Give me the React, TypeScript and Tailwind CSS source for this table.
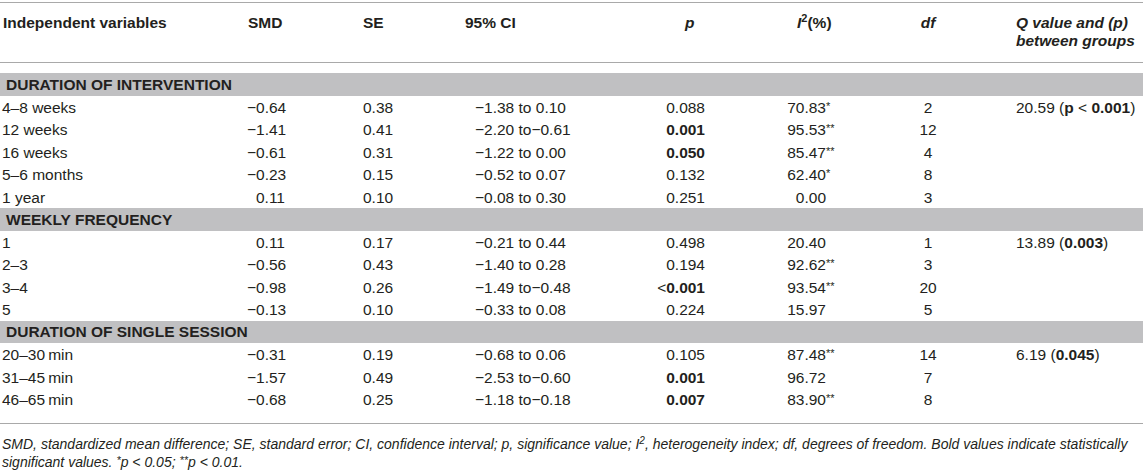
import React from "react";

type Num = { v: React.ReactNode; s?: string; b?: boolean };

type Row =
  | { band: string }
  | {
      label: string;
      smd: string;
      se: string;
      ci: string;
      p: Num;
      i2: Num;
      df: string;
      q?: React.ReactNode;
    };

const ROWS: Row[] = [
  { band: "DURATION OF INTERVENTION" },
  {
    label: "4–8 weeks",
    smd: "−0.64",
    se: "0.38",
    ci: "−1.38 to 0.10",
    p: { v: "0.088" },
    i2: { v: "70.83", s: "*" },
    df: "2",
    q: (
      <>
        20.59 (<b>p</b> &lt; <b>0.001</b>)
      </>
    ),
  },
  { label: "12 weeks", smd: "−1.41", se: "0.41", ci: "−2.20 to−0.61", p: { v: "0.001", b: true }, i2: { v: "95.53", s: "**" }, df: "12" },
  { label: "16 weeks", smd: "−0.61", se: "0.31", ci: "−1.22 to 0.00", p: { v: "0.050", b: true }, i2: { v: "85.47", s: "**" }, df: "4" },
  { label: "5–6 months", smd: "−0.23", se: "0.15", ci: "−0.52 to 0.07", p: { v: "0.132" }, i2: { v: "62.40", s: "*" }, df: "8" },
  { label: "1 year", smd: "0.11", se: "0.10", ci: "−0.08 to 0.30", p: { v: "0.251" }, i2: { v: "0.00" }, df: "3" },
  { band: "WEEKLY FREQUENCY" },
  {
    label: "1",
    smd: "0.11",
    se: "0.17",
    ci: "−0.21 to 0.44",
    p: { v: "0.498" },
    i2: { v: "20.40" },
    df: "1",
    q: (
      <>
        13.89 (<b>0.003</b>)
      </>
    ),
  },
  { label: "2–3", smd: "−0.56", se: "0.43", ci: "−1.40 to 0.28", p: { v: "0.194" }, i2: { v: "92.62", s: "**" }, df: "3" },
  {
    label: "3–4",
    smd: "−0.98",
    se: "0.26",
    ci: "−1.49 to−0.48",
    p: {
      v: (
        <>
          &lt;<b>0.001</b>
        </>
      ),
    },
    i2: { v: "93.54", s: "**" },
    df: "20",
  },
  { label: "5", smd: "−0.13", se: "0.10", ci: "−0.33 to 0.08", p: { v: "0.224" }, i2: { v: "15.97" }, df: "5" },
  { band: "DURATION OF SINGLE SESSION" },
  {
    label: "20–30\u2009min",
    smd: "−0.31",
    se: "0.19",
    ci: "−0.68 to 0.06",
    p: { v: "0.105" },
    i2: { v: "87.48", s: "**" },
    df: "14",
    q: (
      <>
        6.19 (<b>0.045</b>)
      </>
    ),
  },
  { label: "31–45\u2009min", smd: "−1.57", se: "0.49", ci: "−2.53 to−0.60", p: { v: "0.001", b: true }, i2: { v: "96.72" }, df: "7" },
  { label: "46–65\u2009min", smd: "−0.68", se: "0.25", ci: "−1.18 to−0.18", p: { v: "0.007", b: true }, i2: { v: "83.90", s: "**" }, df: "8" },
];

// column widths add up to the 1143px page
const GRID = "grid grid-cols-[240px_115px_99px_186px_110px_130px_128px_135px]";

const Stars = ({ s }: { s?: string }) =>
  s ? <span className="relative -top-[3px] text-[11px]">{s}</span> : null;

export default function App() {
  return (
    <div
      className="w-[1143px] bg-white pt-[2px] text-[15.5px] text-[#231f20]"
      style={{ fontFamily: '"Liberation Sans", Arial, sans-serif' }}
    >
      {/* header */}
      <div className={`${GRID} border-y border-[#a9a9a9] pt-[11px] pb-[12px] font-bold leading-[18px]`}>
        <div className="pl-[3px]">Independent variables</div>
        <div className="pl-2">SMD</div>
        <div className="pl-2">SE</div>
        <div className="pl-[11px]">95% CI</div>
        <div className="pl-[45px] italic">p</div>
        <div className="pl-[47px] whitespace-nowrap">
          <i>I</i>
          <span className="relative -top-[6px] text-[11px]">2</span>(%)
        </div>
        <div className="w-[96px] text-center italic">df</div>
        <div className="whitespace-nowrap pl-2 italic">
          Q value and (p)
          <br />
          between groups
        </div>
      </div>

      <div className="mt-[10px]">
        {ROWS.map((r, i) =>
          "band" in r ? (
            <div key={i} className="flex h-[22.5px] items-center bg-[#c0c0c2] pl-[6px] font-bold">
              {r.band}
            </div>
          ) : (
            <div key={i} className={`${GRID} h-[22.5px] items-center whitespace-nowrap`}>
              <div className="pl-[2px]">{r.label}</div>
              <div className="pl-[7px]">
                <span className="inline-block w-[38px] text-right">{r.smd}</span>
              </div>
              <div className="pl-2">{r.se}</div>
              <div className="pl-[21px]">{r.ci}</div>
              <div>
                <span className={`inline-block w-[65px] text-right ${r.p.b ? "font-bold" : ""}`}>
                  {r.p.v}
                </span>
              </div>
              <div>
                <span className="inline-block w-[76px] text-right">{r.i2.v}</span>
                <Stars s={r.i2.s} />
              </div>
              <div className="w-[96px] text-center">{r.df}</div>
              <div className="pl-2">{r.q}</div>
            </div>
          ),
        )}
      </div>

      {/* footnote */}
      <div className="mt-[12px] border-t border-[#a9a9a9] pt-[12px] pl-[2px] text-[14px] leading-[17px] italic">
        SMD, standardized mean difference; SE, standard error; CI, confidence interval; p, significance
        value; I<span className="relative -top-[5px] text-[10px]">2</span>, heterogeneity index; df,
        degrees of freedom. Bold values indicate statistically
        <br />
        significant values. <Stars s="*" />p &lt; 0.05; <Stars s="**" />p &lt; 0.01.
      </div>
    </div>
  );
}
